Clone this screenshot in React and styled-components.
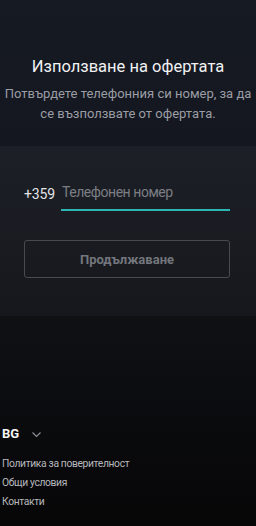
import React, { useState } from "react";
import styled, { createGlobalStyle } from "styled-components";

const Global = createGlobalStyle`
  html, body {
    margin: 0;
    padding: 0;
    background: #0b0c0f;
  }
  body {
    font-family: Roboto, "Noto Sans", sans-serif;
    -webkit-font-smoothing: antialiased;
  }
`;

const Page = styled.div`
  width: 256px;
  min-height: 526px;
  display: flex;
  flex-direction: column;
  background: linear-gradient(180deg, #161a23 0%, #141720 28%, #0f1014 62%, #060607 100%);
`;

const Header = styled.header`
  height: 146px;
  box-sizing: border-box;
  padding-top: 56px;
  text-align: center;
`;

const Title = styled.h1`
  margin: 0;
  font-size: 16.5px;
  font-weight: 400;
  color: #f1f1f3;
  line-height: 22px;
`;

const Subtitle = styled.p`
  margin: 6px 0 0;
  font-size: 13px;
  line-height: 20px;
  color: #9b9da4;
`;

const Card = styled.section`
  height: 170px;
  box-sizing: border-box;
  padding: 35px 26px 0 24px;
  background: linear-gradient(180deg, #1c1f26 0%, #191b21 60%, #15171c 100%);
`;

const PhoneRow = styled.div`
  display: flex;
  align-items: flex-end;
  gap: 6px;
`;

const Prefix = styled.span`
  font-size: 14px;
  color: #e3e4e6;
  line-height: 22px;
  padding-bottom: 6px;
  letter-spacing: -0.15px;
`;

const Input = styled.input`
  flex: 1;
  min-width: 0;
  background: transparent;
  border: none;
  border-bottom: 2px solid #2cb5b4;
  padding: 0 0 6px 1px;
  font-family: inherit;
  font-size: 14px;
  line-height: 22px;
  letter-spacing: -0.45px;
  color: #e3e4e6;
  outline: none;
  &::placeholder {
    color: #7b7e85;
  }
`;

const Button = styled.button`
  display: block;
  width: 100%;
  height: 38px;
  margin-top: 29px;
  background: transparent;
  border: 1px solid #474a51;
  border-radius: 3px;
  font-family: inherit;
  font-size: 13px;
  font-weight: 700;
  color: #73767c;
`;

const Footer = styled.footer`
  margin-top: auto;
  padding: 0 0 17px 2px;
`;

const Lang = styled.div`
  display: flex;
  align-items: center;
  gap: 13px;
  font-size: 13px;
  font-weight: 700;
  color: #f4f4f5;
  margin-bottom: 16px;
  svg {
    margin-top: 1px;
  }
`;

const Links = styled.ul`
  list-style: none;
  margin: 0;
  padding: 0;
  display: flex;
  flex-direction: column;
  gap: 5px;
`;

const LinkItem = styled.li`
  font-size: 10.3px;
  line-height: 14px;
  letter-spacing: -0.35px;
  color: #b7b8bd;
`;

export default function App() {
  const [phone, setPhone] = useState("");
  return (
    <>
      <Global />
      <Page>
        <Header>
          <Title>Използване на офертата</Title>
          <Subtitle>
            Потвърдете телефонния си номер, за да
            <br />
            се възползвате от офертата.
          </Subtitle>
        </Header>
        <Card>
          <PhoneRow>
            <Prefix>+359</Prefix>
            <Input
              value={phone}
              onChange={(e) => setPhone(e.target.value)}
              placeholder="Телефонен номер"
            />
          </PhoneRow>
          <Button>Продължаване</Button>
        </Card>
        <Footer>
          <Lang>
            BG
            <svg width="9" height="5" viewBox="0 0 9 5" fill="none">
              <path d="M0.5 0.5l4 4 4-4" stroke="#8e9096" strokeWidth="1.1" />
            </svg>
          </Lang>
          <Links>
            <LinkItem>Политика за поверителност</LinkItem>
            <LinkItem>Общи условия</LinkItem>
            <LinkItem>Контакти</LinkItem>
          </Links>
        </Footer>
      </Page>
    </>
  );
}
